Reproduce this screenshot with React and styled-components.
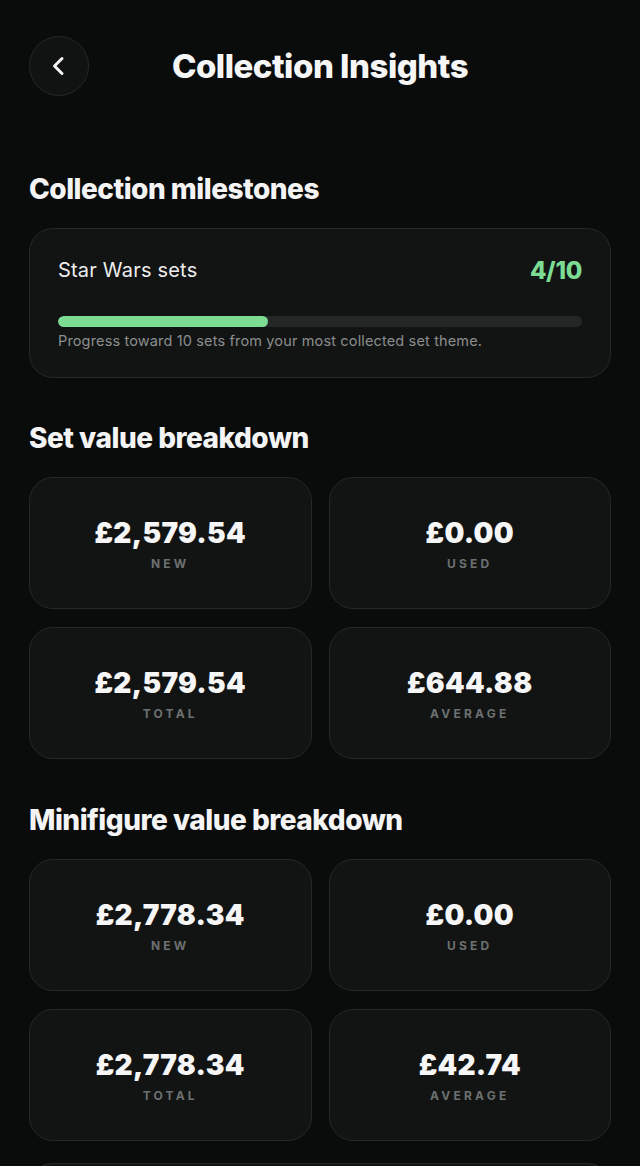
import React from "react";
import styled, { createGlobalStyle } from "styled-components";

const Global = createGlobalStyle`
  html, body { margin: 0; padding: 0; background: #0a0b0b; }
  body { font-family: Inter, "Noto Sans", sans-serif; color: #f4f4f4; -webkit-font-smoothing: antialiased; }
  * { box-sizing: border-box; }
`;

const Page = styled.div`
  display: flex;
  flex-direction: column;
  padding: 36px 29px 0;
  min-height: 1166px;
`;

const Header = styled.header`
  display: grid;
  grid-template-columns: 60px 1fr 60px;
  align-items: center;
  height: 60px;
`;

const BackButton = styled.button`
  width: 60px;
  height: 60px;
  border-radius: 50%;
  background: #111313;
  border: 1.5px solid #262828;
  display: flex;
  align-items: center;
  justify-content: center;
  padding: 0;
  color: #f4f4f4;
`;

const Title = styled.h1`
  margin: 0;
  text-align: center;
  font-size: 33px;
  line-height: 38px;
  font-weight: 800;
  letter-spacing: -0.5px;
  color: #f6f6f6;
`;

const SectionTitle = styled.h2`
  margin: ${(p) => p.$top}px 0 23px;
  font-size: 28px;
  line-height: 32px;
  font-weight: 800;
  letter-spacing: -0.5px;
  color: #f4f4f4;
`;

const Card = styled.div`
  background: #121414;
  border: 1.5px solid #262828;
  border-radius: 24px;
`;

const MilestoneCard = styled(Card)`
  padding: 29px 28px 28px;
  height: 150px;
`;

const MilestoneRow = styled.div`
  display: flex;
  justify-content: space-between;
  align-items: center;
  height: 24px;
`;

const MilestoneName = styled.span`
  font-size: 20px;
  font-weight: 400;
  letter-spacing: 0.2px;
  color: #ededed;
`;

const MilestoneCount = styled.span`
  font-size: 24px;
  font-weight: 800;
  color: #7ddc94;
  letter-spacing: -0.3px;
`;

const Track = styled.div`
  margin-top: 34px;
  height: 11px;
  border-radius: 6px;
  background: #232725;
  overflow: hidden;
`;

const Fill = styled.div`
  height: 100%;
  border-radius: 6px;
  background: #7ddc94;
`;

const Caption = styled.p`
  margin: 5px 0 0;
  font-size: 14.5px;
  line-height: 18px;
  color: #8b8e8e;
  letter-spacing: 0.15px;
`;

const Grid = styled.div`
  display: grid;
  grid-template-columns: 1fr 1fr;
  column-gap: 17px;
  row-gap: 18px;
`;

const ValueCard = styled(Card)`
  height: 132px;
  display: flex;
  flex-direction: column;
  align-items: center;
  justify-content: center;
`;

const Value = styled.div`
  font-size: 28px;
  line-height: 34px;
  font-weight: 900;
  color: #f6f6f6;
  letter-spacing: 0.3px;
  margin-top: 2px;
`;

const Label = styled.div`
  margin-top: 6px;
  font-size: 12px;
  line-height: 16px;
  font-weight: 700;
  letter-spacing: 3.2px;
  color: #6c7070;
  text-transform: uppercase;
`;

const NextCard = styled(Card)`
  margin-top: 22px;
  height: 40px;
  border-bottom: none;
  border-bottom-left-radius: 0;
  border-bottom-right-radius: 0;
`;

const ChevronLeft = () => (
  <svg width="22" height="22" viewBox="0 0 22 22" fill="none">
    <path d="M14 3.5L6.5 11L14 18.5" stroke="#f4f4f4" strokeWidth="3" strokeLinecap="round" strokeLinejoin="round" />
  </svg>
);

const setValues = [
  { v: "£2,579.54", l: "New" },
  { v: "£0.00", l: "Used" },
  { v: "£2,579.54", l: "Total" },
  { v: "£644.88", l: "Average" },
];

const minifigValues = [
  { v: "£2,778.34", l: "New" },
  { v: "£0.00", l: "Used" },
  { v: "£2,778.34", l: "Total" },
  { v: "£42.74", l: "Average" },
];

const ValueGrid = ({ items }) => (
  <Grid>
    {items.map((it, i) => (
      <ValueCard key={i}>
        <Value>{it.v}</Value>
        <Label>{it.l}</Label>
      </ValueCard>
    ))}
  </Grid>
);

export default function App() {
  const progress = 4 / 10;
  return (
    <>
      <Global />
      <Page>
        <Header>
          <BackButton aria-label="Back">
            <ChevronLeft />
          </BackButton>
          <Title>Collection Insights</Title>
          <span />
        </Header>

        <SectionTitle $top={77}>Collection milestones</SectionTitle>
        <MilestoneCard>
          <MilestoneRow>
            <MilestoneName>Star Wars sets</MilestoneName>
            <MilestoneCount>4/10</MilestoneCount>
          </MilestoneRow>
          <Track>
            <Fill style={{ width: `${progress * 100}%` }} />
          </Track>
          <Caption>Progress toward 10 sets from your most collected set theme.</Caption>
        </MilestoneCard>

        <SectionTitle $top={44}>Set value breakdown</SectionTitle>
        <ValueGrid items={setValues} />

        <SectionTitle $top={45}>Minifigure value breakdown</SectionTitle>
        <ValueGrid items={minifigValues} />

        <NextCard />
      </Page>
    </>
  );
}
